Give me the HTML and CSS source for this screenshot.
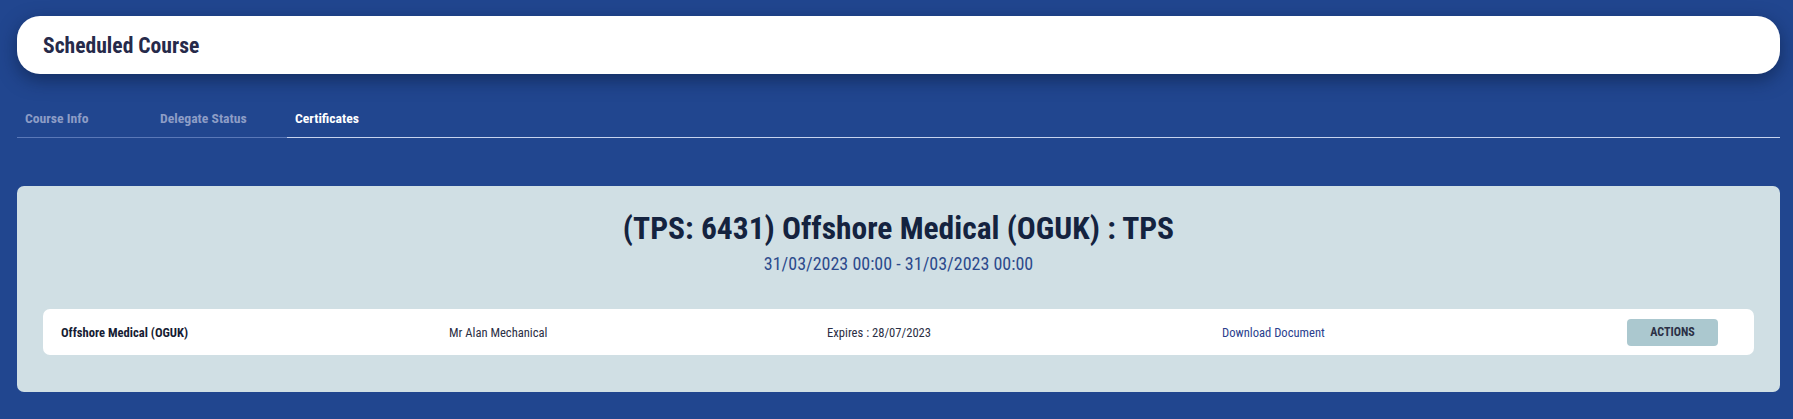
FILE: index.html
```html
<!DOCTYPE html>
<html lang="en">
<head>
    <meta charset="UTF-8">
    <meta name="viewport" content="width=device-width, initial-scale=1.0">
    <title>Scheduled Course</title>
    <link rel="stylesheet" href="styles.css">
</head>
<body>
<div class="page">
    <!-- Page title card -->
    <header class="title-card">
        <h1>Scheduled Course</h1>
    </header>

    <!-- Tabs -->
    <nav class="tabs">
        <a class="tab" href="#">Course Info</a>
        <a class="tab" href="#">Delegate Status</a>
        <a class="tab active" href="#">Certificates</a>
    </nav>

    <!-- Certificates panel -->
    <section class="panel">
        <h2 class="course-name">(TPS: 6431) Offshore Medical (OGUK) : TPS</h2>
        <p class="course-dates">31/03/2023 00:00 - 31/03/2023 00:00</p>

        <div class="cert-row">
            <span class="cert-name">Offshore Medical (OGUK)</span>
            <span class="cert-delegate">Mr Alan Mechanical</span>
            <span class="cert-expiry">Expires : 28/07/2023</span>
            <a class="cert-link" href="#">Download Document</a>
            <button class="actions-btn">ACTIONS</button>
        </div>
    </section>
</div>
</body>
</html>
```

FILE: styles.css
```css
body {
    margin: 0;
    padding: 0;
    background-color: #21468f;
    font-family: Roboto, "Liberation Sans", sans-serif;
    font-stretch: condensed;
}
.page {
    padding: 16px 13px 0 17px;
}
.title-card {
    background-color: #fff;
    border-radius: 23px;
    height: 58px;
    display: flex;
    align-items: center;
    padding: 0 26px;
    box-shadow: 0 6px 18px rgba(10, 25, 60, 0.55);
}
.title-card h1 {
    margin: 0;
    font-size: 21.6px;
    font-weight: 700;
    color: #262a4a;
}
.tabs {
    display: flex;
    margin-top: 26px;
    border-bottom: 1px solid #c7d3ee;
}
.tab {
    width: 119px;
    padding: 10px 8px 11px;
    font-size: 13.7px;
    font-weight: 700;
    color: #8d9dc6;
    text-decoration: none;
    border-bottom: 1px solid #5a78b8;
    margin-bottom: -1px;
}
.tab.active {
    color: #fff;
    border-bottom-color: #c7d3ee;
}
.panel {
    margin-top: 48px;
    background-color: #d0dfe4;
    border-radius: 7px;
    padding: 23px 26px 37px;
    text-align: center;
}
.course-name {
    margin: 0;
    font-size: 31.5px;
    line-height: 40px;
    font-weight: 700;
    color: #14233f;
}
.course-dates {
    margin: 4px 0 0;
    font-size: 18px;
    line-height: 22px;
    color: #2c4a8c;
}
.cert-row {
    margin-top: 34px;
    background-color: #fff;
    border-radius: 7px;
    height: 46px;
    display: grid;
    grid-template-columns: 388px 378px 395px 1fr auto;
    align-items: center;
    padding: 0 36px 0 18px;
    text-align: left;
    font-size: 12.6px;
}
.cert-name {
    font-weight: 700;
    color: #161c33;
}
.cert-delegate,
.cert-expiry {
    color: #2b2f45;
}
.cert-link {
    color: #2b3f8e;
    text-decoration: none;
}
.actions-btn {
    background-color: #abc8cf;
    color: #2b3146;
    border: none;
    border-radius: 4px;
    width: 91px;
    height: 27px;
    font-family: inherit;
    font-stretch: condensed;
    font-size: 12px;
    font-weight: 700;
    cursor: pointer;
}
```
